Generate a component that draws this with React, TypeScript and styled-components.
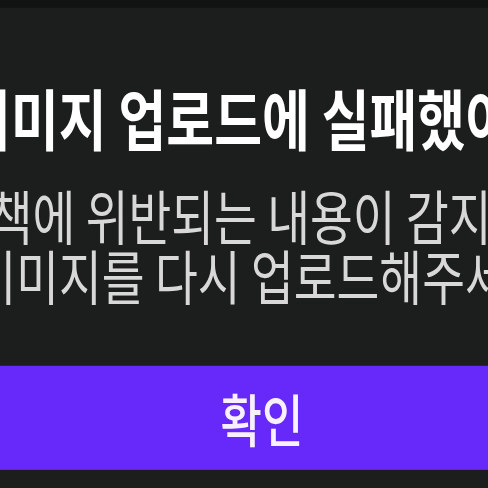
import React from "react";
import styled, { createGlobalStyle } from "styled-components";

const Global = createGlobalStyle`
  html, body { margin: 0; padding: 0; background: #111312; overflow: hidden; }
  body { font-family: "Noto Sans CJK KR", "Noto Sans", sans-serif; }
  #root { width: 488px; height: 488px; overflow: hidden; }
`;

/* The reference is vertically stretched; lay out at natural size and stretch once. */
const Page = styled.div`
  width: 488px;
  height: 385px;
  padding-top: 5.5px;
  box-sizing: border-box;
  display: flex;
  justify-content: center;
  overflow: hidden;
  transform: scaleY(1.27);
  transform-origin: top left;
`;

const Dialog = styled.div`
  flex: 0 0 640px;
  margin-left: 36px;
  background: #1c1d1d;
  display: flex;
  flex-direction: column;
  align-items: stretch;
  padding-top: 59px;
`;

const Title = styled.h1`
  margin: 0;
  font-size: 52px;
  font-weight: 700;
  line-height: 54px;
  color: #ffffff;
  text-align: center;
  white-space: nowrap;
`;

const Body = styled.p`
  margin: 26.7px 0 0;
  font-size: 46.5px;
  font-weight: 400;
  line-height: 47px;
  color: #d8d8d9;
  text-align: center;
  white-space: nowrap;
`;

const Button = styled.button`
  margin-top: 48.8px;
  height: 82px;
  border: none;
  background: #6629fa;
  color: #f7f0ff;
  font-family: inherit;
  font-size: 45px;
  font-weight: 500;
  display: flex;
  align-items: center;
  justify-content: center;
  padding: 0;
`;

export default function App() {
  return (
    <>
      <Global />
      <Page>
        <Dialog>
          <Title>이미지 업로드에 실패했어요</Title>
          <Body>
            정책에 위반되는 내용이 감지되어
            <br />
            이미지를 다시 업로드해주세요
          </Body>
          <Button>확인</Button>
        </Dialog>
      </Page>
    </>
  );
}
